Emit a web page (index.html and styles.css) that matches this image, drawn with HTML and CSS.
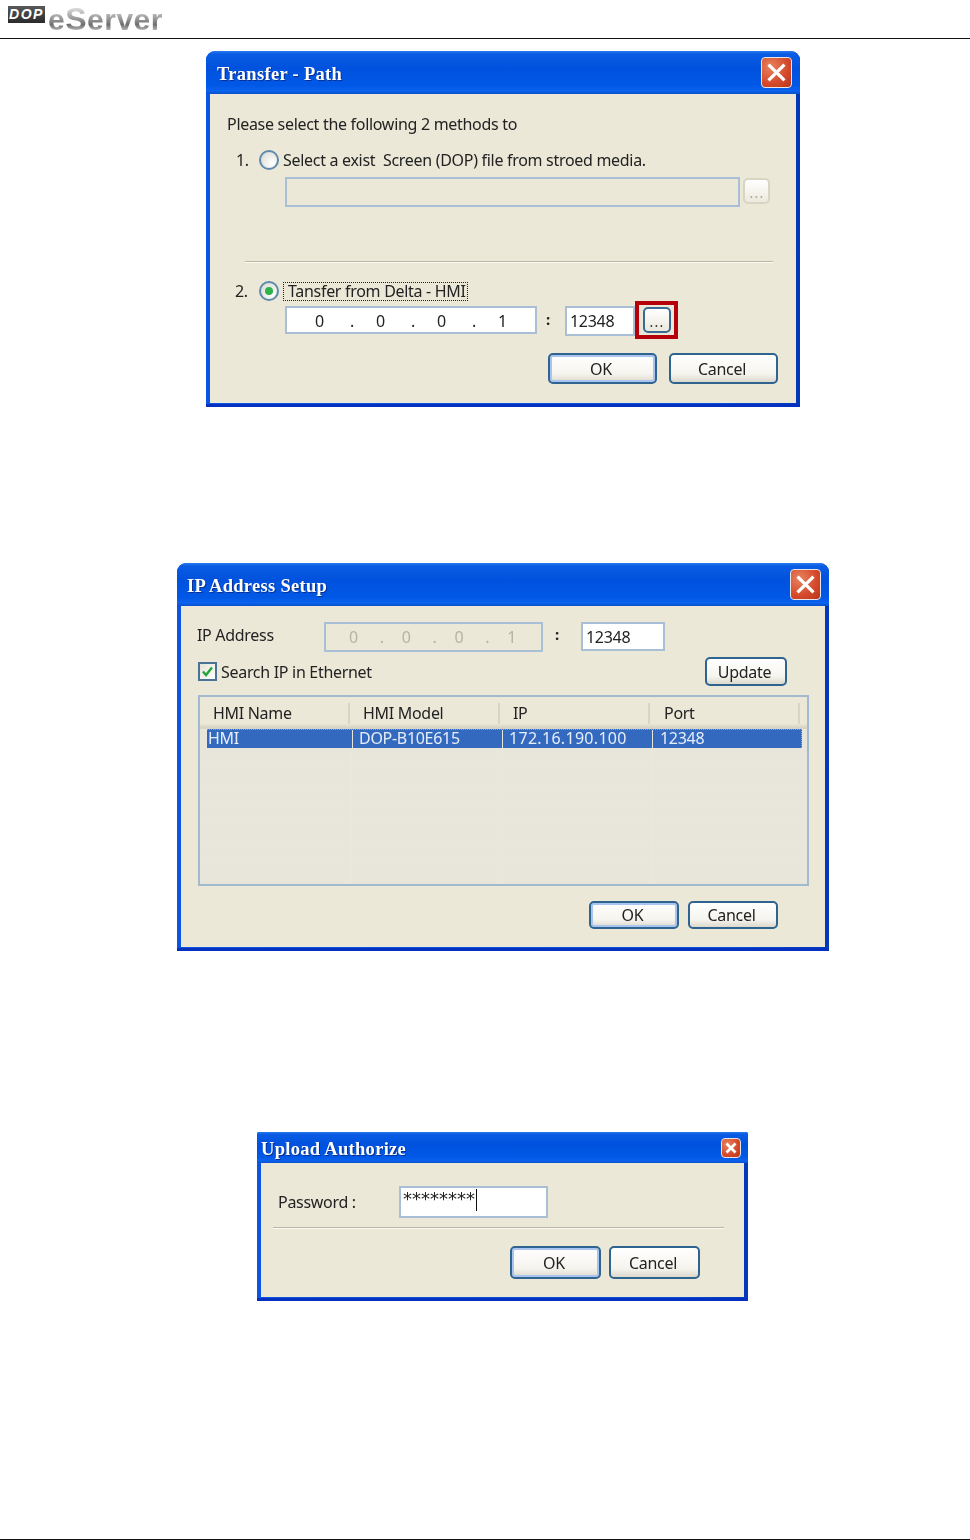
FILE: index.html
```html
<!DOCTYPE html>
<html lang="en">
<head>
  <meta charset="UTF-8" />
  <title>eServer</title>
  <link rel="stylesheet" href="styles.css">
</head>
<body>
  <div class="page">
    <header class="top">
      <span class="dop">DOP</span>
      <span class="eserver">e<span class="big">S</span>erver</span>
    </header>

    <main class="dialogs">
      <!-- Transfer path -->
      <section class="dialog d-path">
        <div class="titlebar">
          <h2>Transfer - Path</h2>
          <button class="close"><svg viewBox="0 0 20 20"><path d="M4.5 4.5 15.5 15.5M15.5 4.5 4.5 15.5"/></svg></button>
        </div>
        <div class="body">
          <p class="intro">Please select the following 2 methods to</p>
          <div class="option first">
            <span class="num">1.</span>
            <span class="radio"></span>
            <span class="opt-label">Select a exist&nbsp; Screen (DOP) file from stroed media.</span>
          </div>
          <div class="file-row">
            <div class="field off file-field"></div>
            <button class="browse off">...</button>
          </div>
          <div class="rule path-rule"></div>
          <div class="option second">
            <span class="num">2.</span>
            <span class="radio on"></span>
            <span class="opt-label focus">Tansfer from Delta - HMI</span>
          </div>
          <div class="ip-row">
            <div class="field ip">
              <span>0</span><i>.</i><span>0</span><i>.</i><span>0</span><i>.</i><span>1</span>
            </div>
            <span class="colon">:</span>
            <div class="field port">12348</div>
            <div class="mark"><button class="browse">...</button></div>
          </div>
          <div class="actions">
            <button class="btn default">OK</button>
            <button class="btn">Cancel</button>
          </div>
        </div>
      </section>

      <!-- IP setup -->
      <section class="dialog d-ip">
        <div class="titlebar">
          <h2>IP Address Setup</h2>
          <button class="close"><svg viewBox="0 0 20 20"><path d="M4.5 4.5 15.5 15.5M15.5 4.5 4.5 15.5"/></svg></button>
        </div>
        <div class="body">
          <div class="addr-row">
            <span class="addr-label">IP Address</span>
            <div class="field off ip">
              <span>0</span><i>.</i><span>0</span><i>.</i><span>0</span><i>.</i><span>1</span>
            </div>
            <span class="colon">:</span>
            <div class="field port">12348</div>
          </div>
          <div class="search-row">
            <label class="check">
              <span class="box"><svg viewBox="0 0 15 15"><path d="M3 7.5 6 11 12 3.5"/></svg></span>
              Search IP in Ethernet
            </label>
            <button class="btn update">Update</button>
          </div>
          <div class="list">
            <div class="list-head">
              <span>HMI Name</span>
              <span>HMI Model</span>
              <span>IP</span>
              <span>Port</span>
            </div>
            <div class="list-row">
              <span>HMI</span>
              <span>DOP-B10E615</span>
              <span>172.16.190.100</span>
              <span>12348</span>
            </div>
            <div class="list-fill"></div>
          </div>
          <div class="actions">
            <button class="btn default">OK</button>
            <button class="btn">Cancel</button>
          </div>
        </div>
      </section>

      <!-- Password -->
      <section class="dialog d-auth">
        <div class="titlebar">
          <h2>Upload Authorize</h2>
          <button class="close"><svg viewBox="0 0 20 20"><path d="M5 5 15 15M15 5 5 15"/></svg></button>
        </div>
        <div class="body">
          <div class="pass-row">
            <span class="pass-label">Password :</span>
            <div class="field pass"><span class="stars">********</span></div>
          </div>
          <div class="rule auth-rule"></div>
          <div class="actions">
            <button class="btn default">OK</button>
            <button class="btn">Cancel</button>
          </div>
        </div>
      </section>
    </main>

    <footer class="bottom"></footer>
  </div>
</body>
</html>
```

FILE: styles.css
```css
* {
  box-sizing: border-box;
}

body {
  margin: 0;
  background: #fff;
  font-family: "Noto Sans", Arial, sans-serif;
  font-size: 16px;
  letter-spacing: -0.3px;
  color: #222;
}

.page {
  display: flex;
  flex-direction: column;
  height: 1540px;
  overflow: hidden;
}

/* cabecera */
.top {
  display: flex;
  align-items: flex-start;
  height: 39px;
  padding: 0 0 0 8px;
  border-bottom: 1px solid #111;
}

.dop {
  width: 37px;
  height: 17px;
  margin-top: 6px;
  background: linear-gradient(#5a5a5a, #2a2a2a);
  color: #fff;
  font: italic bold 14px/17px "Liberation Sans", sans-serif;
  letter-spacing: 1.5px;
  text-align: center;
}

.eserver {
  height: 38px;
  margin-left: 3px;
  padding-right: 2px;
  font: bold 30px/38px "Liberation Sans", sans-serif;
  letter-spacing: 0.5px;
  background: linear-gradient(#d4d4d4 25%, #8a8a8a 55%, #6e6e6e 65%, #c4c4c4 82%);
  -webkit-background-clip: text;
  background-clip: text;
  color: transparent;
  filter: blur(0.4px);
}

.eserver .big {
  font-size: 32px;
}

.bottom {
  height: 1px;
  margin-top: auto;
  background: #111;
}

.dialogs {
  display: flex;
  flex-direction: column;
  align-items: center;
  padding-left: 36px;
}

/* ventana */
.dialog {
  padding: 0 4px 4px;
  border-radius: 9px 9px 0 0;
  background: linear-gradient(90deg, #0a56e0, #0a50d8 85%, #0338b8);
  box-shadow: inset 0 -3px 0 #0431c0;
  filter: blur(0.35px);
}

.d-path {
  width: 594px;
  margin-top: 12px;
}

.d-ip {
  width: 652px;
  margin-top: 156px;
}

.d-auth {
  width: 491px;
  margin: 181px 1px 0 0;
  border-radius: 2px 2px 0 0;
}

.titlebar {
  display: flex;
  align-items: center;
  justify-content: space-between;
  height: 43px;
  margin: 0 -4px;
  padding: 0 8px 0 11px;
  border-radius: inherit;
  background: linear-gradient(#2a7af0 0, #0a5ce4 7%, #0052de 40%, #0058e6 80%, #0a62ee 93%, #0b4fc8 100%);
}

.d-ip .titlebar {
  padding-left: 10px;
}

.d-auth .titlebar {
  height: 31px;
  padding: 0 7px 0 4px;
}

.titlebar h2 {
  margin: 3px 0 0;
  color: #fff;
  font: bold 18.5px "Liberation Serif", "DejaVu Serif", serif;
  letter-spacing: 0.3px;
  text-shadow: 1px 1px 0 #0a2f90;
}

.close {
  width: 31px;
  height: 31px;
  padding: 0;
  border: 1px solid #e6e6e6;
  border-radius: 4px;
  background: radial-gradient(circle at 30% 30%, #e8835f, #d4492a 60%, #b8341a);
}

.d-auth .close {
  width: 20px;
  height: 20px;
}

.close svg {
  display: block;
  width: 100%;
  height: 100%;
}

.close path {
  fill: none;
  stroke: #fff;
  stroke-width: 2.2;
}

.d-auth .close path {
  stroke-width: 3;
}

.body {
  background: #ebe8d8;
}

/* controles */
.field {
  height: 30px;
  border: 2px solid #a9bfd6;
  background: #fff;
  color: #222;
}

.field.off {
  background: #ebe8d8;
  color: #b5b3a6;
}

.ip {
  display: flex;
  justify-content: space-around;
  align-items: center;
}

.ip i {
  position: relative;
  left: 2px;
  font-style: normal;
}

.port {
  padding: 0 0 0 3px;
  line-height: 26px;
}

.colon {
  font-size: 15px;
  font-weight: bold;
  text-align: center;
}

.btn {
  height: 31px;
  padding: 0 3px 0 0;
  border: 2px solid #2f6490;
  border-radius: 5px;
  background: linear-gradient(#fff, #f5f4ee 70%, #dcd8cc);
  color: #222;
  font: inherit;
  letter-spacing: inherit;
}

.btn.default {
  box-shadow: inset 0 0 0 2px #a9c4ee;
}

.browse {
  width: 28px;
  height: 26px;
  padding: 0 0 0 1px;
  border: 2px solid #3a6a94;
  border-radius: 5px;
  background: linear-gradient(#fff, #ece9dc);
  color: #333;
  font: 14px/26px "Noto Sans", sans-serif;
  letter-spacing: 1.2px;
}

.browse.off {
  width: 27px;
  border-color: #d8d5c4;
  color: #a9a796;
}

.actions {
  display: flex;
  justify-content: flex-end;
}

.rule {
  height: 2px;
  border-top: 1px solid #b9b6a4;
  border-bottom: 1px solid #fbfaf4;
}

.radio {
  display: flex;
  align-items: center;
  justify-content: center;
  width: 20px;
  height: 20px;
  border: 2px solid #5f8aae;
  border-radius: 50%;
  background: radial-gradient(circle at 70% 70%, #fff, #d8d7ce);
}

.radio.on::after {
  content: "";
  width: 8px;
  height: 8px;
  border-radius: 50%;
  background: #2fb14c;
}

/* Transfer - Path */
.d-path .body {
  padding: 20px 0 19px;
}

.intro {
  margin: 0 0 0 17px;
  line-height: 20px;
}

.option {
  display: flex;
  align-items: center;
  height: 20px;
}

.option.first {
  margin: 16px 0 0 26px;
}

.option.second {
  margin: 18px 0 0 25px;
}

.num {
  width: 23px;
}

.option.second .num {
  width: 24px;
}

.opt-label {
  margin-left: 4px;
  line-height: 20px;
}

.focus {
  height: 19px;
  padding: 0 1px 0 4px;
  border: 1px dotted #222;
  line-height: 16px;
}

.file-row {
  display: flex;
  gap: 3px;
  margin: 7px 0 0 75px;
}

.file-field {
  width: 455px;
}

.file-row .browse {
  margin-top: 1px;
}

.path-rule {
  width: 528px;
  margin: 54px 0 0 35px;
}

.ip-row {
  display: flex;
  align-items: flex-start;
  margin: 5px 0 0 75px;
}

.ip-row .ip {
  width: 252px;
  height: 28px;
  padding: 1px 16px 0;
}

.ip-row .colon {
  width: 28px;
  padding-right: 6px;
  line-height: 26px;
}

.ip-row .port {
  width: 70px;
}

.mark {
  display: flex;
  justify-content: center;
  align-items: center;
  width: 43px;
  height: 38px;
  margin-top: -5px;
  border: 4px solid #b5000c;
}

.d-path .actions {
  gap: 12px;
  margin: 14px 18px 0 0;
}

.d-path .btn {
  width: 109px;
}

/* IP Address Setup */
.d-ip .body {
  padding: 16px 16px 18px;
}

.addr-row {
  display: flex;
  align-items: flex-start;
}

.addr-label {
  width: 127px;
  line-height: 26px;
}

.addr-row .ip {
  width: 219px;
  padding: 0 15px 0 13px;
}

.addr-row .colon {
  width: 38px;
  padding-right: 10px;
  line-height: 24px;
}

.addr-row .port {
  width: 84px;
  height: 29px;
}

.search-row {
  display: flex;
  justify-content: space-between;
  align-items: center;
  margin: 5px 22px 0 1px;
}

.check {
  display: flex;
  align-items: center;
  gap: 4px;
}

.box {
  width: 19px;
  height: 19px;
  border: 2px solid #4a7396;
  background: linear-gradient(135deg, #e6e4d8, #fff);
}

.box svg {
  display: block;
}

.box path {
  fill: none;
  stroke: #22a63c;
  stroke-width: 2.4;
}

.update {
  width: 82px;
  height: 29px;
}

.list {
  display: flex;
  flex-direction: column;
  height: 191px;
  margin: 9px 0 0 1px;
  border: 2px solid #a3bace;
  background: #e8e6da;
}

.list-head {
  display: grid;
  grid-template-columns: repeat(4, 150px);
  height: 32px;
  padding-top: 6px;
  background: linear-gradient(#ebe8d8 27px, #d9d5c6 30px);
}

.list-head span {
  height: 21px;
  padding-left: 13px;
  border-right: 2px solid #d8d5c6;
  line-height: 20px;
}

.list-head span:last-child {
  padding-left: 14px;
}

.list-row {
  display: grid;
  grid-template-columns: 146px 150px 150px 148px;
  width: 595px;
  height: 19px;
  margin-left: 7px;
  background: #336ac0;
  border-top: 1px dotted #d49a4c;
  border-right: 1px dotted #d49a4c;
  color: #e8eef8;
}

.list-row span {
  padding-left: 6px;
  border-right: 1px solid #e8e6da;
  line-height: 17px;
}

.list-row span:first-child {
  padding-left: 1px;
}

.list-row span:nth-child(3) {
  letter-spacing: 0.3px;
}

.list-row span:last-child {
  padding-left: 7px;
  border-right: 0;
}

.list-fill {
  flex: 1;
  background:
    linear-gradient(90deg, transparent 151px, #eae8dd 151px, #eae8dd 152px, transparent 152px, transparent 301px, #eae8dd 301px, #eae8dd 302px, transparent 302px, transparent 451px, #eae8dd 451px, #eae8dd 452px, transparent 452px),
    repeating-linear-gradient(#e8e6da 0, #e8e6da 18px, #e9e7db 18px, #e9e7db 19px);
}

.d-ip .actions {
  gap: 9px;
  margin: 15px 31px 0 0;
}

.d-ip .actions .btn {
  width: 90px;
  height: 28px;
}

/* Upload Authorize */
.d-auth .body {
  padding: 23px 44px 18px 12px;
}

.pass-row {
  display: flex;
  align-items: center;
  margin-left: 5px;
}

.pass-label {
  width: 121px;
}

.pass {
  width: 149px;
  height: 32px;
  padding-left: 2px;
}

.stars {
  display: inline-block;
  height: 22px;
  padding-right: 1px;
  border-right: 1px solid #111;
  font-family: "DejaVu Sans", sans-serif;
  font-size: 18px;
  letter-spacing: 0;
  line-height: 20px;
}

.auth-rule {
  width: 451px;
  margin-top: 9px;
}

.d-auth .actions {
  gap: 8px;
  margin-top: 17px;
}

.d-auth .btn {
  width: 91px;
  height: 33px;
}
```
